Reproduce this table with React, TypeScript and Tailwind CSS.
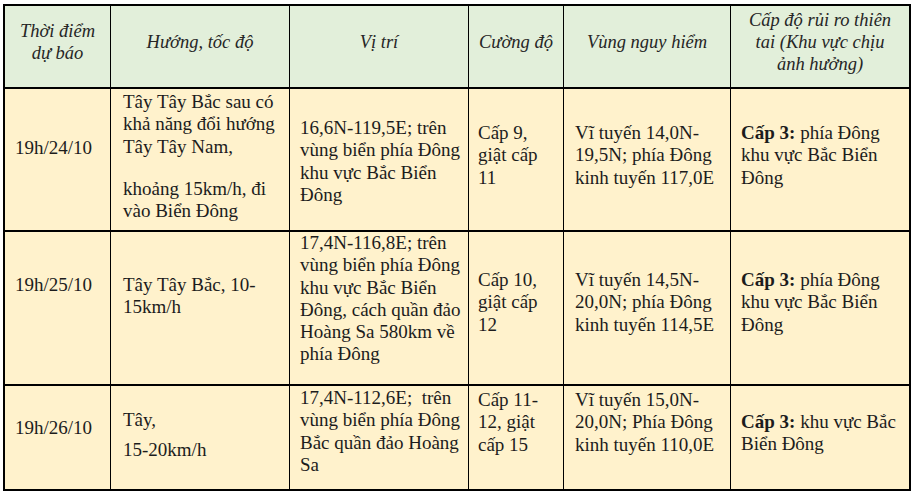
import React from 'react'

type Cell = {
  lines: React.ReactNode[][] // paragraphs -> lines
  pt: string
  gap?: string
}

const head = [
  ['Thời điểm', 'dự báo'],
  ['Hướng, tốc độ'],
  ['Vị trí'],
  ['Cường độ'],
  ['Vùng nguy hiểm'],
  ['Cấp độ rủi ro thiên', 'tai (Khu vực chịu', 'ảnh hưởng)'],
]

const b = (s: string) => <span className="font-bold">{s}</span>

const rows: { h: string; cells: Cell[] }[] = [
  {
    h: 'h-[141px]',
    cells: [
      { lines: [['19h/24/10']], pt: 'pt-[48px] pl-[10px]' },
      {
        lines: [
          ['Tây Tây Bắc sau có', 'khả năng đổi hướng', 'Tây Tây Nam,'],
          ['khoảng 15km/h, đi', 'vào Biển Đông'],
        ],
        pt: 'pt-[2px] pl-[12px]',
        gap: 'mt-[20px]',
      },
      {
        lines: [['16,6N-119,5E; trên', 'vùng biển phía Đông', 'khu vực Bắc Biển', 'Đông']],
        pt: 'pt-[28px] pl-[10px]',
      },
      { lines: [['Cấp 9,', 'giật cấp', '11']], pt: 'pt-[33px] pl-[9px]' },
      {
        lines: [['Vĩ tuyến 14,0N-', '19,5N; phía Đông', 'kinh tuyến 117,0E']],
        pt: 'pt-[33px] pl-[11px]',
      },
      {
        lines: [[<>{b('Cấp 3:')} phía Đông</>, 'khu vực Bắc Biển', 'Đông']],
        pt: 'pt-[33px] pl-[10px]',
      },
    ],
  },
  {
    h: 'h-[152px]',
    cells: [
      { lines: [['19h/25/10']], pt: 'pt-[42px] pl-[10px]' },
      { lines: [['Tây Tây Bắc, 10-', '15km/h']], pt: 'pt-[42px] pl-[12px]' },
      {
        lines: [
          [
            '17,4N-116,8E; trên',
            'vùng biển phía Đông',
            'khu vực Bắc Biển',
            'Đông, cách quần đảo',
            'Hoàng Sa 580km về',
            'phía Đông',
          ],
        ],
        pt: 'pt-0 pl-[10px]',
      },
      { lines: [['Cấp 10,', 'giật cấp', '12']], pt: 'pt-[37px] pl-[9px]' },
      {
        lines: [['Vĩ tuyến 14,5N-', '20,0N; phía Đông', 'kinh tuyến 114,5E']],
        pt: 'pt-[37px] pl-[11px]',
      },
      {
        lines: [[<>{b('Cấp 3:')} phía Đông</>, 'khu vực Bắc Biển', 'Đông']],
        pt: 'pt-[37px] pl-[10px]',
      },
    ],
  },
  {
    h: 'h-[103px]',
    cells: [
      { lines: [['19h/26/10']], pt: 'pt-[31px] pl-[10px]' },
      { lines: [['Tây,'], ['15-20km/h']], pt: 'pt-[23px] pl-[12px]', gap: 'mt-[8px]' },
      {
        lines: [['17,4N-112,6E;  trên', 'vùng biển phía Đông', 'Bắc quần đảo Hoàng', 'Sa']],
        pt: 'pt-[1px] pl-[10px]',
      },
      { lines: [['Cấp 11-', '12, giật', 'cấp 15']], pt: 'pt-[3px] pl-[9px]' },
      {
        lines: [['Vĩ tuyến 15,0N-', '20,0N; Phía Đông', 'kinh tuyến 110,0E']],
        pt: 'pt-[3px] pl-[11px]',
      },
      {
        lines: [[<>{b('Cấp 3:')} khu vực Bắc</>, 'Biển Đông']],
        pt: 'pt-[25px] pl-[10px]',
      },
    ],
  },
]

export default function App() {
  return (
    <div
      className="w-[914px] h-[496px] bg-white overflow-hidden pt-[4px] pl-[3px]"
      style={{ fontFamily: '"Liberation Serif", "Times New Roman", serif' }}
    >
      <div className="w-[908px] grid grid-cols-[105px_178px_178px_94px_166px_178px] gap-x-[1px] gap-y-[2px] p-[2px] bg-black text-[#1c1c1c]">
        {head.map((lines, i) => (
          <div
            key={i}
            className="h-[81px] bg-[#e2efda] flex flex-col items-center justify-center pb-[9px] italic text-[18.5px] leading-[22.3px] text-[#262626]"
          >
            {lines.map(l => (
              <div key={l} className="whitespace-nowrap text-center">
                {l}
              </div>
            ))}
          </div>
        ))}

        {rows.map((r, ri) =>
          r.cells.map((c, ci) => (
            <div
              key={`${ri}-${ci}`}
              className={`${r.h} bg-[#fff2cc] overflow-hidden text-[19px] leading-[22.3px]`}
            >
              <div className={c.pt}>
                {c.lines.map((p, pi) => (
                  <div key={pi} className={pi > 0 ? c.gap : ''}>
                    {p.map((l, li) => (
                      <div key={li} className="whitespace-pre">
                        {l}
                      </div>
                    ))}
                  </div>
                ))}
              </div>
            </div>
          ))
        )}
      </div>
    </div>
  )
}
